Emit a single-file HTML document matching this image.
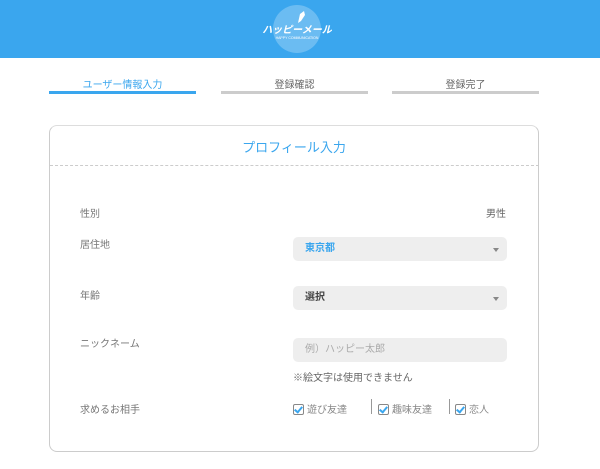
<!DOCTYPE html>
<html><head><meta charset="utf-8"><style>
body{margin:0;width:600px;height:469px;overflow:hidden;background:#fff;font-family:"Liberation Sans","Noto Sans CJK JP",sans-serif;position:relative;color:#666}
.hd{position:absolute;left:0;top:0;width:600px;height:58px;background:#3aa6ee}
.a{position:absolute}
.tab{position:absolute;top:76px;width:147px;text-align:center;font-size:10px;color:#666;height:15px;border-bottom:3px solid #ccc}
.card{position:absolute;left:49px;top:125px;width:488px;height:325px;border:1.5px solid #ccc;border-radius:8px;border-top-color:#ddd}
.lab{position:absolute;left:80px;font-size:10px;color:#777}
.sel{position:absolute;left:293px;width:214px;height:24px;background:#eee;border-radius:5px;font-size:10px;font-weight:bold;line-height:24px;text-indent:12px}
.sel.ar:after{content:"";position:absolute;right:8px;top:11px;border:3px solid transparent;border-top:4px solid #888}
.cb{display:inline-block;width:9px;height:9px;border:1px solid #888;border-radius:2px;vertical-align:-2px;margin-right:3px;position:relative;background:#fff}
.cb:after{content:"";position:absolute;left:2px;top:0;width:3px;height:6px;border:solid #3aa6ee;border-width:0 2px 2px 0;transform:rotate(40deg)}
</style></head><body>
<div class="hd"></div>
<svg class="a" style="left:262px;top:2px" width="70" height="54"><circle cx="35" cy="27" r="24" fill="#fff" opacity=".25"/><path d="M38 12l4-3 1 4-4 6-3 2z" fill="#fff"/><text x="35" y="31" font-size="10" font-weight="bold" fill="#fff" text-anchor="middle" font-style="italic">ハッピーメール</text><text x="35" y="37" font-size="3.5" fill="#fff" text-anchor="middle">HAPPY COMMUNICATION</text></svg>
<div class="tab" style="left:49px;color:#3aa6ee;border-color:#3aa6ee">ユーザー情報入力</div>
<div class="tab" style="left:221px">登録確認</div>
<div class="tab" style="left:392px">登録完了</div>
<div class="card"></div>
<div class="a" style="left:49px;top:137px;width:490px;text-align:center;font-size:13px;color:#3aa6ee">プロフィール入力</div>
<div class="a" style="left:50px;top:165px;width:489px;border-top:1px dashed #ccc"></div>
<div class="lab" style="top:205px">性別</div>
<div class="a" style="left:486px;top:205px;font-size:10px">男性</div>
<div class="lab" style="top:236px">居住地</div>
<div class="sel ar" style="top:237px;color:#3aa6ee">東京都</div>
<div class="lab" style="top:287px">年齢</div>
<div class="sel ar" style="top:286px;color:#444">選択</div>
<div class="lab" style="top:335px">ニックネーム</div>
<div class="sel" style="top:338px;color:#aaa;font-weight:normal">例）ハッピー太郎</div>
<div class="a" style="left:293px;top:369px;font-size:10px">※絵文字は使用できません</div>
<div class="lab" style="top:401px">求めるお相手</div>
<div class="a" style="left:293px;top:401px;font-size:10px;color:#888;white-space:nowrap"><span class="cb"></span>遊び友達</div>
<div class="a" style="left:371px;top:399px;height:15px;border-left:1px solid #999"></div>
<div class="a" style="left:378px;top:401px;font-size:10px;color:#888;white-space:nowrap"><span class="cb"></span>趣味友達</div>
<div class="a" style="left:449px;top:399px;height:15px;border-left:1px solid #999"></div>
<div class="a" style="left:455px;top:401px;font-size:10px;color:#888;white-space:nowrap"><span class="cb"></span>恋人</div>
</body></html>
